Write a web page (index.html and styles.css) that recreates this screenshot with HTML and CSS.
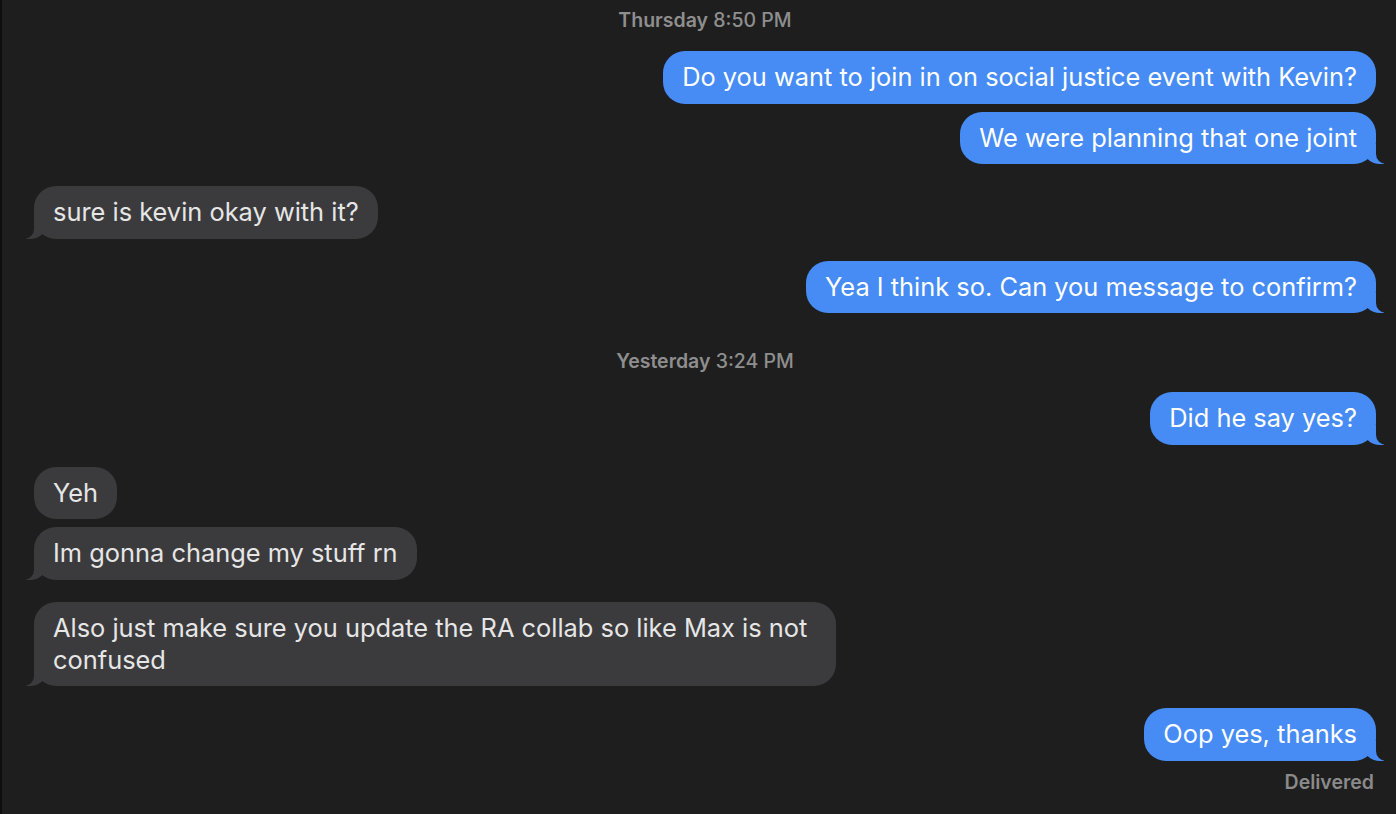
FILE: index.html
```html
<!DOCTYPE html>
<html>
<head>
<meta charset="utf-8">
<link rel="stylesheet" href="styles.css">
</head>
<body>
<div class="thread">
  <div class="stamp"><b>Thursday</b> 8:50 PM</div>
  <div class="bubble me">Do you want to join in on social justice event with Kevin?</div>
  <div class="bubble me tail">We were planning that one joint</div>
  <div class="bubble them tail grp">sure is kevin okay with it?</div>
  <div class="bubble me tail grp">Yea I think so. Can you message to confirm?</div>
  <div class="stamp stamp2"><b>Yesterday</b> 3:24 PM</div>
  <div class="bubble me tail">Did he say yes?</div>
  <div class="bubble them grp">Yeh</div>
  <div class="bubble them tail">Im gonna change my stuff rn</div>
  <div class="bubble them tail grp">Also just make sure you update the RA collab so like Max is not confused</div>
  <div class="bubble me tail grp">Oop yes, thanks</div>
  <div class="status">Delivered</div>
</div>
</body>
</html>
```
FILE: styles.css
```css
html, body {
  margin: 0;
  padding: 0;
  background: #1e1e1e;
  height: 100%;
}
body {
  border-left: 2px solid #0e0e0e;
  box-sizing: border-box;
  font-family: Inter, "Noto Sans", sans-serif;
  overflow: hidden;
}
.thread {
  display: flex;
  flex-direction: column;
  gap: 8px;
  padding: 10px 20px 0 32px;
}
.stamp {
  align-self: center;
  font-size: 19.5px;
  line-height: 20px;
  color: #8e8e8e;
  font-weight: 500;
  margin-bottom: 13px;
}
.stamp b {
  font-weight: 600;
}
.stamp2 {
  margin-top: 30px;
}
.bubble {
  position: relative;
  font-size: 25.4px;
  line-height: 32px;
  padding: 10.25px 19px;
  border-radius: 22px;
  max-width: 764px;
}
.grp {
  margin-top: 14px;
}
.me {
  align-self: flex-end;
  background: #468cf4;
  color: #ffffff;
}
.them {
  align-self: flex-start;
  background: #3b3b3d;
  color: #e6e6e6;
}
.tail::before,
.tail::after {
  content: "";
  position: absolute;
  bottom: 0;
  height: 20px;
}
.me.tail::before {
  right: -8px;
  width: 20px;
  background: #468cf4;
  border-bottom-left-radius: 16px 14px;
}
.me.tail::after {
  right: -10px;
  width: 10px;
  background: #1e1e1e;
  border-bottom-left-radius: 10px;
}
.them.tail::before {
  left: -8px;
  width: 20px;
  background: #3b3b3d;
  border-bottom-right-radius: 16px 14px;
}
.them.tail::after {
  left: -10px;
  width: 10px;
  background: #1e1e1e;
  border-bottom-right-radius: 10px;
}
.status {
  align-self: flex-end;
  font-size: 19.5px;
  line-height: 20px;
  font-weight: 600;
  color: #8a8a8a;
  margin-top: 3px;
  padding-right: 2px;
}
```
